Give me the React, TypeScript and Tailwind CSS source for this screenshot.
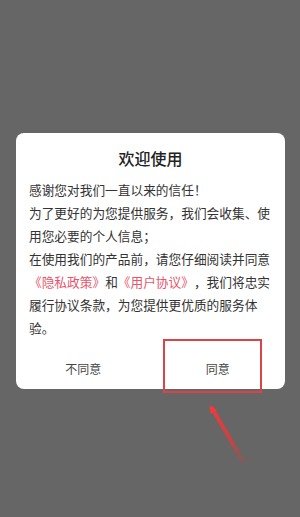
export default function App() {
  return (
    <div
      className="relative h-[517px] w-[300px] overflow-hidden bg-[#666666] pt-[133px] pl-[16px] pr-[15px]"
      style={{ fontFamily: '"Noto Sans CJK SC", "Noto Sans", sans-serif' }}
    >
      <div className="rounded-[8px] bg-white">
        <h1 className="pt-[14px] text-center text-[16px] font-medium leading-[22px] text-[#222]">欢迎使用</h1>
        <div className="mt-[9px] px-[13px] text-[12.7px] leading-[23px] text-[#333] [text-spacing-trim:space-all]">
          <p>感谢您对我们一直以来的信任！</p>
          <p>为了更好的为您提供服务，我们会收集、使用您必要的个人信息；</p>
          <p>
            在使用我们的产品前，请您仔细阅读并同意
            <span className="text-[#e8566c]">《隐私政策》</span>和
            <span className="text-[#e8566c]">《用户协议》</span>
            ，我们将忠实履行协议条款，为您提供更优质的服务体验。
          </p>
        </div>
        <div className="mt-[10px] flex h-[40px] text-[12px] text-[#444]">
          <button className="flex flex-1 items-center justify-center">不同意</button>
          <button className="flex flex-1 items-center justify-center">同意</button>
        </div>
      </div>

      {/* annotation overlay */}
      <div className="absolute left-[163px] top-[339px] h-[54px] w-[99px] border-2 border-[#d94444]" />
      <svg className="absolute left-0 top-0" width="300" height="517" viewBox="0 0 300 517">
        <defs>
          <linearGradient id="fade" x1="211" y1="407" x2="244" y2="463" gradientUnits="userSpaceOnUse">
            <stop offset="0" stopColor="#ee3b3b" stopOpacity="1" />
            <stop offset="0.6" stopColor="#e23a3a" stopOpacity="0.8" />
            <stop offset="1" stopColor="#d83a3a" stopOpacity="0.15" />
          </linearGradient>
        </defs>
        <line x1="212" y1="408" x2="244" y2="463" stroke="url(#fade)" strokeWidth="4" strokeLinecap="round" />
        <path d="M209 405 L217 410 L211 414 Z" fill="#ee3b3b" />
      </svg>
    </div>
  );
}
